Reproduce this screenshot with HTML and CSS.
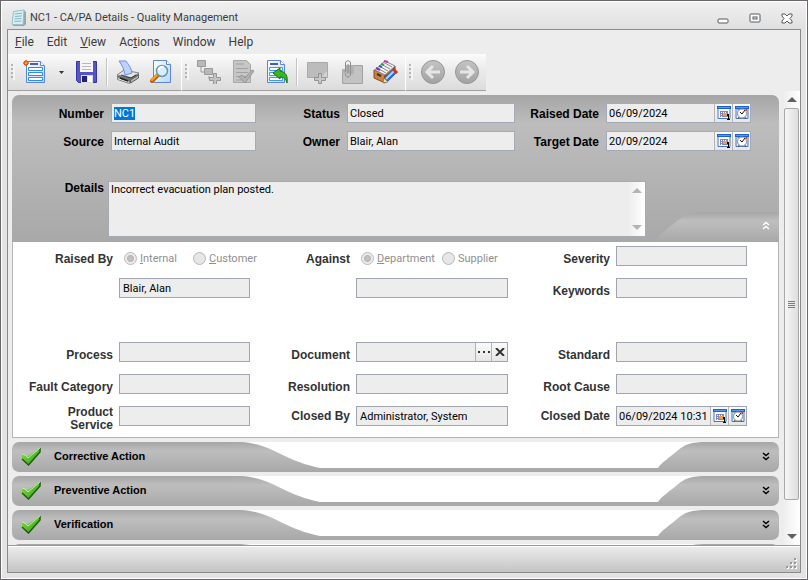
FILE: index.html
```html
<!DOCTYPE html>
<html lang="en">
  <head>
    <meta charset="UTF-8" />
    <meta name="viewport" content="width=device-width, initial-scale=1" />
    <title>NC1 - CA/PA Details - Quality Management</title>
    <link rel="stylesheet" href="styles.css">
  </head>
  <body>
    <!-- shared shapes -->
    <svg class="defs" width="0" height="0" aria-hidden="true">
      <defs>
        <linearGradient id="bar" x1="0" y1="0" x2="0" y2="1">
          <stop offset="0" stop-color="#a6a6a6" />
          <stop offset="0.3" stop-color="#bebebe" />
          <stop offset="1" stop-color="#a8a8a8" />
        </linearGradient>
        <linearGradient id="sheet" x1="0" y1="0" x2="1" y2="1">
          <stop offset="0" stop-color="#ffffff" />
          <stop offset="1" stop-color="#b4d8fa" />
        </linearGradient>
        <linearGradient id="tick" x1="0" y1="0" x2="1" y2="1">
          <stop offset="0" stop-color="#8ee04c" />
          <stop offset="1" stop-color="#2c9a16" />
        </linearGradient>
        <linearGradient id="disc" x1="0" y1="0" x2="0" y2="1">
          <stop offset="0" stop-color="#c4c4c4" />
          <stop offset="1" stop-color="#a2a2a2" />
        </linearGradient>
      </defs>
      <symbol id="calendar" viewBox="0 0 14 14">
        <path d="M1 1.500h12v11H1z" fill="#f4f8ff" stroke="#4a78b8" />
        <path d="M0 0h14v3H0z" fill="#1c62c8" />
        <path d="M1 1h12v1H1z" fill="#4f9cf0" />
        <path d="M3 5h8v6H3z" fill="#8486b8" />
        <path d="M4 6h1v1H4zM6 6h1v1H6zM8 6h1v1H8zM4 8h1v1H4zM6 8h1v1H6zM4 10h1v1H4z" fill="#fff" />
        <path d="M6 7h4v3H6z" fill="#f4a030" />
        <path d="M10 8h2v5h1v1h-3v-1h1v-3h-1z" fill="#000" />
      </symbol>
      <symbol id="clock" viewBox="0 0 14 14">
        <path d="M1 1.500h12v11H1z" fill="#dcecff" stroke="#4a78b8" />
        <path d="M0 0h14v3H0z" fill="#1c62c8" />
        <path d="M1 1h12v1H1z" fill="#4f9cf0" />
        <path d="M4 11l-1 2M10 11l1 2" stroke="#555" />
        <circle cx="7" cy="7.500" r="4.500" fill="#fff" stroke="#8c8c8c" />
        <path d="M5 6l2 2 3-4" fill="none" stroke="#111" />
        <path d="M2 3h3L3 5zM9 3h3v2z" fill="#999" />
        <path d="M11 3h1v2h-1z" fill="#e03020" />
      </symbol>
      <symbol id="check" viewBox="0 0 20 20">
        <path d="M1 8l5.500 2.500L19 2v4L7.500 19 1 13z" fill="url(#tick)" />
        <path d="M19 2v4L7.500 19 1 13" fill="none" stroke="#176108" stroke-width="1.500" />
        <path d="M1 8l3 1 3 3L19 2" fill="none" stroke="#c4eda4" />
      </symbol>
      <symbol id="curve-left" viewBox="0 0 90 30">
        <path d="M0 0C40 -2 50 18 90 26V30H0z" fill="url(#bar)" />
      </symbol>
      <symbol id="curve-right" viewBox="0 0 50 30">
        <path d="M0 30V26C4 20 11 16 19 9 28 2 32 0 50 0V30z" fill="url(#bar)" />
      </symbol>
      <symbol id="chevrons-down" viewBox="0 0 8 9">
        <path d="M1 1l3 2.500L7 1M1 5l3 2.500L7 5" fill="none" stroke="currentColor" stroke-width="1.500" />
      </symbol>
      <symbol id="chevrons-up" viewBox="0 0 8 9">
        <path d="M1 4l3-2.500L7 4M1 8l3-2.500L7 8" fill="none" stroke="currentColor" stroke-width="1.500" />
      </symbol>
      <symbol id="arrow-up" viewBox="0 0 10 5">
        <path d="M0 5l5-5 5 5z" fill="currentColor" />
      </symbol>
      <symbol id="arrow-down" viewBox="0 0 10 5">
        <path d="M0 0h10L5 5z" fill="currentColor" />
      </symbol>
    </svg>

    <div class="window">
      <header class="titlebar">
        <svg class="app-icon" width="16" height="18" viewBox="0 0 16 18">
          <path d="M3 3l10-2 2 2v12l-2 2H2z" fill="#9aa6aa" />
          <path d="M2.500 2.500L13 1l-1 14.500H1z" fill="#d3f0f5" stroke="#9cc0c8" />
          <path d="M4 5l7-.8M4 7.500l7-.6M3.500 10l7-.5M3.500 12.500l7-.5" stroke="#86b6c4" />
        </svg>
        <h1>NC1 - CA/PA Details - Quality Management</h1>
        <div class="window-buttons">
          <button type="button" aria-label="Minimize">
            <svg width="12" height="14"><rect x="1" y="8" width="10" height="4" rx="1" fill="#fff" stroke="#555a60" /></svg>
          </button>
          <button type="button" aria-label="Maximize">
            <svg width="12" height="14"><rect x="1" y="3" width="10" height="8" rx="1" fill="#fff" stroke="#555a60" /><rect x="4" y="6" width="4" height="2" fill="#fff" stroke="#555a60" /></svg>
          </button>
          <button type="button" aria-label="Close">
            <svg width="12" height="14"><path d="M1 3h3l2 2 2-2h3v2L9 7.500 11 10v2H8L6 10l-2 2H1v-2l2-2.500L1 5z" fill="#fff" stroke="#555a60" /></svg>
          </button>
        </div>
      </header>

      <div class="client">
        <nav class="menubar">
          <a href="#"><u>F</u>ile</a>
          <a href="#">Edit</a>
          <a href="#"><u>V</u>iew</a>
          <a href="#">Ac<u>t</u>ions</a>
          <a href="#">Window</a>
          <a href="#">Help</a>
        </nav>

        <div class="toolbar">
          <div class="tool-group">
            <span class="grip"></span>
            <button type="button" aria-label="New">
              <svg width="24" height="24" viewBox="0 0 24 24">
                <path d="M3.500 1.500h14l4 4v17h-18z" fill="url(#sheet)" stroke="#5e86d8" />
                <path d="M17.500 1.500v4h4" fill="#fff" stroke="#5e86d8" />
                <path d="M7 4h8" stroke="#5558b0" stroke-width="2" />
                <path d="M5.500 7.500h14v3h-14zM5.500 12.500h14v3h-14zM5.500 17.500h14v3h-14z" fill="#fff" stroke="#2f8de8" />
                <path d="M3 0v6M0 3h6M1 1l4 4M5 1L1 5" stroke="#e0401c" />
                <circle cx="3" cy="3" r="2" fill="#ffa41c" stroke="#e83c10" />
              </svg>
            </button>
            <button type="button" class="drop" aria-label="New options">
              <svg width="5" height="3"><path d="M0 0h5L2.500 3z" fill="#333" /></svg>
            </button>
            <button type="button" aria-label="Save">
              <svg width="24" height="24" viewBox="0 0 24 24">
                <path d="M1.500 1.500h20v21h-18l-2-2z" fill="#5556c4" stroke="#3537a0" />
                <path d="M5 1h13v11H5z" fill="#f6f6f8" />
                <path d="M7 3.500h9M7 6.500h9M7 9.500h9" stroke="#b8b8bc" />
                <path d="M6 15h12v8H6z" fill="#dcdce6" />
                <path d="M7 16h5v6H7z" fill="#23246e" />
                <path d="M13 16h4v6h-4z" fill="#fff" />
              </svg>
            </button>
            <span class="separator"></span>
            <button type="button" aria-label="Print">
              <svg width="24" height="24" viewBox="0 0 24 24">
                <path d="M1 15l7-5 15 3v4l-9 6-13-4z" fill="#707376" />
                <path d="M1 15l7-5 15 3-8 5z" fill="#e3e4e6" stroke="#8a8a8a" />
                <path d="M3 1h7c2 3 5 6 6 12l-7 2C8 9 6 5 3 1z" fill="#bcd4fb" stroke="#6c8fdc" />
                <path d="M5 15l10 3 5-3" fill="none" stroke="#333" />
                <path d="M1.500 17.500l12 4v2l-12-4z" fill="#f8f8f8" stroke="#808080" />
                <path d="M14.500 20l8-5v3l-8 5z" fill="#b4b6b8" stroke="#606060" />
                <path d="M4 18l8 3" stroke="#222" stroke-width="1.500" />
              </svg>
            </button>
            <button type="button" aria-label="Print preview">
              <svg width="24" height="24" viewBox="0 0 24 24">
                <path d="M3.500.5h13l4 4v18h-17z" fill="url(#sheet)" stroke="#5e86d8" />
                <path d="M16.500.5v4h4" fill="#fff" stroke="#5e86d8" />
                <path d="M8 15l-6 6" stroke="#b8620c" stroke-width="4" stroke-linecap="round" />
                <path d="M8 14l-6 6" stroke="#f5a430" stroke-width="2" stroke-linecap="round" />
                <circle cx="12" cy="11" r="5.500" fill="#d4f0fe" stroke="#6e90a8" stroke-width="1.500" />
                <path d="M8.500 10a4 4 0 0 1 5-3" fill="none" stroke="#fff" stroke-width="2" />
              </svg>
            </button>
          </div>

          <div class="tool-group">
            <span class="grip"></span>
            <button type="button" disabled aria-label="Workflow">
              <svg width="26" height="24" viewBox="0 0 26 24">
                <path d="M5 7v5h6M13 16v3h6" fill="none" stroke="#999" />
                <path d="M1.500.5h8v6h-8zM8.500 8.500h8v6h-8z" fill="#b9b9b9" stroke="#999" />
                <path d="M17.500 13.500h3v4h4v3h-4v4h-3v-4h-4v-3h4z" fill="#c3c3c3" stroke="#969696" />
              </svg>
            </button>
            <button type="button" disabled aria-label="Approve">
              <svg width="24" height="24" viewBox="0 0 24 24">
                <path d="M2.500.5h13l4 4v18h-17z" fill="#c6c6c6" stroke="#a8a8a8" />
                <path d="M5 4h8M5 8.500h12M5 12.500h12M5 16.500h12M5 20h10" stroke="#a2a2a2" />
                <path d="M8 17l3-2 3 3 7-8 2 1-9 12z" fill="#b2b2b2" stroke="#979797" />
              </svg>
            </button>
            <button type="button" aria-label="Reopen">
              <svg width="24" height="24" viewBox="0 0 24 24">
                <path d="M2.500.5h13l4 4v18h-17z" fill="url(#sheet)" stroke="#5e86d8" />
                <path d="M15.500.5v4h4" fill="#fff" stroke="#5e86d8" />
                <path d="M5 4h8" stroke="#5558b0" stroke-width="2" />
                <path d="M4.500 7.500h13v3h-13zM4.500 12.500h13v3h-13zM4.500 17.500h13v3h-13z" fill="#fff" stroke="#3f9be8" />
                <path d="M8 13l7-5v3c6 1 8 5 7 12-1-4-3-6-7-6v2z" fill="#3cb428" stroke="#15700e" />
              </svg>
            </button>
            <span class="separator"></span>
            <button type="button" disabled aria-label="Add note">
              <svg width="24" height="24" viewBox="0 0 24 24">
                <path d="M1.500 2.500h20v15h-20z" fill="#bcbcbc" stroke="#aaa" />
                <path d="M15 17l6-6v6z" fill="#d2d2d2" />
                <path d="M12.500 13.500h3v4h4v3h-4v3h-3v-3h-4v-3h4z" fill="#c6c6c6" stroke="#929292" />
              </svg>
            </button>
            <button type="button" disabled aria-label="Attach">
              <svg width="24" height="24" viewBox="0 0 24 24">
                <path d="M2.500 9.500h3v-4h17v18h-20z" fill="#c2c2c2" stroke="#a2a2a2" />
                <path d="M5 5h9v9H2V9h3z" fill="#b2b2b2" />
                <path d="M5.500 12V3c0-3 5-3 5 0v11c0 4-5 4-5 0M8 4v9" fill="none" stroke="#8c8c8c" />
              </svg>
            </button>
            <button type="button" aria-label="Card index">
              <svg width="26" height="24" viewBox="0 0 26 24">
                <path d="M1 10l11 4v9L1 18z" fill="#c98242" stroke="#84501c" />
                <path d="M12 14l10-8v8l-10 9z" fill="#9c6230" stroke="#6c4018" />
                <path d="M2 10L12 1l10 5-10 9z" fill="#f2f2f2" stroke="#888" />
                <path d="M4 8l9 5M6 6l9 5M8 4l9 5M10 2l9 5" stroke="#8c8c8c" />
                <path d="M3 8l4 2" stroke="#8232c0" stroke-width="2" />
                <path d="M6 6l3 1" stroke="#2462d0" stroke-width="2" />
                <path d="M8 4l3 1" stroke="#28a838" stroke-width="2" />
                <path d="M11 1l4 1" stroke="#d02cb0" stroke-width="2" />
                <path d="M4 14l4 2" stroke="#503014" stroke-width="2" />
                <path d="M13 20l9-9" stroke="#2c6cc8" stroke-width="5" />
                <path d="M13 19l8-8" stroke="#a4d4fc" stroke-width="2" />
                <path d="M21 12l2-2" stroke="#e22c14" stroke-width="6" />
                <path d="M10 23l1-5 4 4z" fill="#f4dca0" stroke="#555" stroke-width=".5" />
              </svg>
            </button>
          </div>

          <div class="tool-group">
            <span class="grip"></span>
            <button type="button" disabled aria-label="Back">
              <svg width="26" height="26" viewBox="0 0 26 26">
                <circle cx="13" cy="13" r="11.500" fill="url(#disc)" stroke="#969696" />
                <path d="M20 13H7M13 7l-6 6 6 6" fill="none" stroke="#e6e6e6" stroke-width="3" />
              </svg>
            </button>
            <button type="button" disabled aria-label="Forward">
              <svg width="26" height="26" viewBox="0 0 26 26">
                <circle cx="13" cy="13" r="11.500" fill="url(#disc)" stroke="#969696" />
                <path d="M6 13h13M13 7l6 6-6 6" fill="none" stroke="#e6e6e6" stroke-width="3" />
              </svg>
            </button>
          </div>
        </div>

        <div class="workspace">
          <main class="content">
            <section class="summary">
              <div class="summary-grid">
                <label for="number">Number</label>
                <input type="text" id="number" class="field" value="NC1" />
                <label for="status">Status</label>
                <input type="text" id="status" class="field" value="Closed" readonly />
                <label for="raised">Raised Date</label>
                <div class="field combo">
                  <input type="text" id="raised" value="06/09/2024" />
                  <button type="button" aria-label="Pick date"><svg width="14" height="14"><use href="#calendar" /></svg></button>
                  <button type="button" aria-label="Pick time"><svg width="14" height="14"><use href="#clock" /></svg></button>
                </div>
                <label for="source">Source</label>
                <input type="text" id="source" class="field" value="Internal Audit" readonly />
                <label for="owner">Owner</label>
                <input type="text" id="owner" class="field" value="Blair, Alan" readonly />
                <label for="target">Target Date</label>
                <div class="field combo">
                  <input type="text" id="target" value="20/09/2024" />
                  <button type="button" aria-label="Pick date"><svg width="14" height="14"><use href="#calendar" /></svg></button>
                  <button type="button" aria-label="Pick time"><svg width="14" height="14"><use href="#clock" /></svg></button>
                </div>
              </div>
              <div class="details-row">
                <label for="details">Details</label>
                <div class="field memo">
                  <textarea id="details" readonly>Incorrect evacuation plan posted.</textarea>
                  <div class="memo-scroll">
                    <svg width="10" height="5"><use href="#arrow-up" /></svg>
                    <svg width="10" height="5"><use href="#arrow-down" /></svg>
                  </div>
                </div>
              </div>
              <button type="button" class="collapse" aria-label="Collapse">
                <svg width="50" height="30"><use href="#curve-right" /></svg>
                <span class="collapse-end"><svg width="8" height="9"><use href="#chevrons-up" /></svg></span>
              </button>
            </section>

            <section class="form-grid">
              <span class="label low" id="raised-by-label">Raised By</span>
              <div class="radios wide" role="radiogroup" aria-labelledby="raised-by-label">
                <label><input type="radio" name="raisedby" checked disabled /><span><u>I</u>nternal</span></label>
                <label><input type="radio" name="raisedby" disabled /><span><u>C</u>ustomer</span></label>
              </div>
              <span class="label low" id="against-label">Against</span>
              <div class="radios" role="radiogroup" aria-labelledby="against-label">
                <label><input type="radio" name="against" checked disabled /><span><u>D</u>epartment</span></label>
                <label><input type="radio" name="against" disabled /><span>Supplier</span></label>
              </div>
              <label class="label low" for="severity">Severity</label>
              <input type="text" id="severity" class="field" />

              <input type="text" class="field raised-by" aria-label="Raised by person" value="Blair, Alan" />
              <input type="text" class="field against" aria-label="Against name" />
              <label class="label low" for="keywords">Keywords</label>
              <input type="text" id="keywords" class="field" />

              <div class="spacer"></div>

              <label class="label low first" for="process">Process</label>
              <input type="text" id="process" class="field" />
              <label class="label low" for="document">Document</label>
              <div class="field combo narrow">
                <input type="text" id="document" />
                <button type="button" aria-label="Browse"><svg width="12" height="4"><path d="M0 1h2v2H0zM5 1h2v2H5zM10 1h2v2h-2z" fill="#333" /></svg></button>
                <button type="button" aria-label="Clear"><svg width="10" height="8"><path d="M1 0l8 8M9 0L1 8" stroke="#333" stroke-width="2" /></svg></button>
              </div>
              <label class="label low" for="standard">Standard</label>
              <input type="text" id="standard" class="field" />

              <label class="label low first" for="fault">Fault Category</label>
              <input type="text" id="fault" class="field" />
              <label class="label low" for="resolution">Resolution</label>
              <input type="text" id="resolution" class="field" />
              <label class="label low" for="cause">Root Cause</label>
              <input type="text" id="cause" class="field" />

              <label class="label low first" for="product">Product<br />Service</label>
              <input type="text" id="product" class="field" />
              <label class="label" for="closedby">Closed By</label>
              <input type="text" id="closedby" class="field" value="Administrator, System" />
              <label class="label" for="closed">Closed Date</label>
              <div class="field combo">
                <input type="text" id="closed" value="06/09/2024 10:31" />
                <button type="button" aria-label="Pick date"><svg width="14" height="14"><use href="#calendar" /></svg></button>
                <button type="button" aria-label="Pick time"><svg width="14" height="14"><use href="#clock" /></svg></button>
              </div>
            </section>

            <button type="button" class="section-bar">
              <span class="bar-start"><svg width="20" height="20"><use href="#check" /></svg>Corrective Action</span>
              <svg width="90" height="30"><use href="#curve-left" /></svg>
              <span class="bar-middle"></span>
              <svg width="50" height="30"><use href="#curve-right" /></svg>
              <span class="bar-end"><svg width="8" height="9"><use href="#chevrons-down" /></svg></span>
            </button>
            <button type="button" class="section-bar">
              <span class="bar-start"><svg width="20" height="20"><use href="#check" /></svg>Preventive Action</span>
              <svg width="90" height="30"><use href="#curve-left" /></svg>
              <span class="bar-middle"></span>
              <svg width="50" height="30"><use href="#curve-right" /></svg>
              <span class="bar-end"><svg width="8" height="9"><use href="#chevrons-down" /></svg></span>
            </button>
            <button type="button" class="section-bar">
              <span class="bar-start"><svg width="20" height="20"><use href="#check" /></svg>Verification</span>
              <svg width="90" height="30"><use href="#curve-left" /></svg>
              <span class="bar-middle"></span>
              <svg width="50" height="30"><use href="#curve-right" /></svg>
              <span class="bar-end"><svg width="8" height="9"><use href="#chevrons-down" /></svg></span>
            </button>
            <div class="section-bar">
              <span class="bar-start"></span>
              <svg width="90" height="30"><use href="#curve-left" /></svg>
              <span class="bar-middle"></span>
              <svg width="50" height="30"><use href="#curve-right" /></svg>
              <span class="bar-end"></span>
            </div>
          </main>

          <div class="scrollbar">
            <span class="scroll-arrow"><svg width="10" height="5"><use href="#arrow-up" /></svg></span>
            <span class="thumb"><span class="thumb-grip"></span></span>
            <span class="track"></span>
            <span class="scroll-arrow"><svg width="10" height="5"><use href="#arrow-down" /></svg></span>
          </div>
        </div>

        <footer class="statusbar">
          <svg width="12" height="12">
            <path d="M8 0h2v2H8zM4 4h2v2H4zM8 4h2v2H8zM0 8h2v2H0zM4 8h2v2H4zM8 8h2v2H8z" fill="#fff" transform="translate(1 1)" />
            <path d="M8 0h2v2H8zM4 4h2v2H4zM8 4h2v2H8zM0 8h2v2H0zM4 8h2v2H4zM8 8h2v2H8z" fill="#999" />
          </svg>
        </footer>
      </div>
    </div>

    <script>
      const number = document.getElementById("number");
      number.focus();
      number.select();
    </script>
  </body>
</html>
```
FILE: styles.css
```css
* {
  box-sizing: border-box;
}
body {
  margin: 0;
  font-family: Roboto, Tahoma, sans-serif;
  font-size: 11px;
  color: #000;
}
button {
  padding: 0;
  border: 0;
  background: none;
  font: inherit;
  color: inherit;
}
svg {
  display: block;
  flex: none;
}
.defs {
  position: absolute;
}

/* window frame */
.window {
  display: flex;
  flex-direction: column;
  height: 100vh;
  padding: 0 6px 6px;
  border: 1px solid #69676a;
  background: #e4e4e4;
  box-shadow: inset 0 0 0 1px #fff;
}
.titlebar {
  display: flex;
  align-items: center;
  height: 27px;
  margin: 1px -5px 0;
  padding: 4px 8px 0 9px;
  background: linear-gradient(#f0f0f0, #e0e0e0);
}
.titlebar h1 {
  flex: 1;
  margin: 0 0 0 3px;
  font-size: 11px;
  font-weight: normal;
  color: #3b3b3b;
}
.window-buttons {
  display: flex;
  gap: 20px;
  padding-right: 5px;
}
.client {
  display: flex;
  flex: 1;
  flex-direction: column;
  min-height: 0;
  border: 1px solid #8b8b8b;
  background: #ededed;
}

/* menu and toolbar */
.menubar {
  display: flex;
  flex: none;
  align-items: center;
  gap: 13px;
  height: 24px;
  padding: 0 7px;
  font-size: 12px;
}
.menubar a {
  color: #3b3b3b;
  text-decoration: none;
}
.toolbar {
  display: flex;
  flex: none;
  height: 37px;
}
.tool-group {
  display: flex;
  align-items: center;
  padding-right: 2px;
  border-right: 1px solid #fff;
  border-bottom: 1px solid #a0a0a0;
  background: linear-gradient(#fbfbfb, #e9e9e9 50%, #dcdcdc);
}
.tool-group:last-child {
  border-right: 0;
}
.tool-group button {
  display: flex;
  align-items: center;
  justify-content: center;
  width: 34px;
  height: 34px;
}
.tool-group .drop {
  width: 18px;
}
.grip {
  width: 4px;
  height: 16px;
  margin: 0 3px;
  background: repeating-linear-gradient(#b4b4b4 0 2px, transparent 2px 4px);
  border-right: 2px solid #f4f4f4;
}
.separator {
  width: 2px;
  height: 28px;
  margin: 0 3px 0 2px;
  border-left: 1px solid #c4c4c4;
  border-right: 1px solid #fff;
}

/* scrolling area */
.workspace {
  display: flex;
  flex: 1;
  min-height: 0;
}
.content {
  display: flex;
  flex: 1;
  flex-direction: column;
  min-width: 0;
  overflow: hidden;
  padding: 4px 5px 0 4px;
}
.scrollbar {
  display: flex;
  flex-direction: column;
  width: 16px;
  background: linear-gradient(90deg, #efefef, #fff);
  color: #606060;
}
.scroll-arrow {
  display: flex;
  align-items: center;
  justify-content: center;
  height: 17px;
}
.thumb {
  display: flex;
  flex: 14;
  align-items: center;
  justify-content: center;
  margin-right: 1px;
  border: 1px solid #a8a8a8;
  border-radius: 2px;
  background: linear-gradient(90deg, #f6f6f6, #dedede);
}
.thumb-grip {
  width: 7px;
  height: 7px;
  background: repeating-linear-gradient(#7c7c7c 0 1px, transparent 1px 2px);
}
.track {
  flex: 1;
}
.statusbar {
  display: flex;
  flex: none;
  align-items: flex-end;
  justify-content: flex-end;
  height: 27px;
  padding: 2px;
  border-top: 1px solid #999;
  background: linear-gradient(#ededed, #c4c4c4);
  box-shadow: inset 0 1px #fff;
}

/* fields */
.field {
  width: 100%;
  min-width: 0;
  height: 20px;
  padding: 0 2px;
  border: 1px solid #a4abb8;
  border-radius: 0;
  background: #ededed;
  font: 11px Roboto, Tahoma, sans-serif;
  color: #000;
  outline: 0;
}
.field::selection {
  background: #0078d7;
  color: #fff;
}
.combo {
  display: flex;
  padding: 0;
}
.combo input {
  flex: 1;
  width: 0;
  min-width: 0;
  padding: 0 2px;
  border: 0;
  background: none;
  font: inherit;
  outline: 0;
}
.combo button {
  display: flex;
  align-items: center;
  justify-content: center;
  width: 18px;
  border-left: 1px solid #b4b4b4;
  background: linear-gradient(#fafafa, #e6e6e6);
}
.combo.narrow button {
  width: 16px;
}

/* grey summary panel */
.summary {
  position: relative;
  flex: none;
  padding: 8px 0 5px;
  border-radius: 7px 7px 0 0;
  background: linear-gradient(#a5a5a5, #bdbdbd 28px, #a8a8a8);
}
.summary label,
.label {
  font: bold 12px/13px "Liberation Sans", Arial, sans-serif;
  text-align: right;
}
.summary-grid {
  display: grid;
  grid-template-columns: 99fr 145fr 91fr 168fr 91fr 145fr 28fr;
  gap: 8px 0;
  align-items: center;
}
.summary-grid label {
  padding: 2px 7px 0 0;
}
.summary-grid label:nth-of-type(4) {
  grid-column: 1;
}
.details-row {
  display: grid;
  grid-template-columns: 96fr 538fr 133fr;
  margin-top: 30px;
}
.details-row label {
  padding: 1px 4px 0 0;
}
.memo {
  display: flex;
  height: 56px;
  padding: 0;
}
.memo textarea {
  flex: 1;
  padding: 0 2px;
  border: 0;
  background: none;
  font: inherit;
  line-height: 15px;
  resize: none;
  outline: 0;
  overflow: hidden;
}
.memo-scroll {
  display: flex;
  flex-direction: column;
  align-items: center;
  justify-content: space-between;
  width: 17px;
  padding: 6px 0;
  background: linear-gradient(90deg, #ededed, #fff);
  color: #b4b4b4;
}
.collapse {
  position: absolute;
  right: 0;
  bottom: 0;
  display: flex;
  color: #fff;
}
.collapse-end {
  display: flex;
  align-items: center;
  justify-content: flex-end;
  width: 71px;
  height: 30px;
  padding: 0 9px 4px 0;
  background: linear-gradient(#a6a6a6, #bebebe 30%, #a8a8a8);
}

/* white form panel */
.form-grid {
  display: grid;
  flex: none;
  grid-template-columns:
    minmax(0, 106fr) minmax(0, 131fr) minmax(0, 106fr) minmax(0, 152fr)
    minmax(0, 108fr) minmax(0, 131fr) minmax(0, 31fr);
  grid-auto-rows: 20px;
  row-gap: 12px;
  align-items: center;
  padding: 4px 0 11px;
  border: 1px solid #b4b4b4;
  border-top: 0;
  background: #fff;
}
.form-grid .field {
  padding-left: 3px;
  border-color: #a0a5b0;
}
.form-grid .combo {
  padding-left: 0;
}
.label {
  padding-right: 6px;
  color: #333;
}
.low {
  padding-top: 6px;
}
.first {
  grid-column: 1;
}
.raised-by {
  grid-column: 2;
}
.against {
  grid-column: 4;
}
.spacer {
  grid-column: 1 / -1;
}
.radios {
  display: flex;
  gap: 7px;
  padding: 5px 0 0 5px;
  white-space: nowrap;
  color: #8f8f8f;
}
.radios.wide {
  gap: 16px;
}
.radios label {
  display: flex;
  align-items: center;
  gap: 3px;
}
.radios input {
  flex: none;
  width: 13px;
  height: 13px;
  margin: 0;
  appearance: none;
  border: 1px solid #b8b8b8;
  border-radius: 50%;
  background: #e6e6e6;
}
.radios input:checked {
  background: radial-gradient(#c0c0c0 0 2px, #b4b4b4 3px, #ececec 4px);
}

/* collapsed sections */
.section-bar {
  display: flex;
  flex: none;
  height: 30px;
  margin-top: 4px;
  border-radius: 7px;
  overflow: hidden;
  background: #fff;
  font: bold 11px "Liberation Sans", Arial, sans-serif;
}
.bar-start,
.bar-end {
  display: flex;
  align-items: center;
  height: 30px;
  background: linear-gradient(#a6a6a6, #bebebe 30%, #a8a8a8);
}
.bar-start {
  gap: 13px;
  width: 218px;
  padding: 0 0 2px 9px;
}
.bar-middle {
  flex: 1;
  height: 30px;
  border-bottom: 4px solid #a9a9a9;
}
.bar-end {
  justify-content: flex-end;
  width: 71px;
  padding: 0 9px 2px 0;
}
```
